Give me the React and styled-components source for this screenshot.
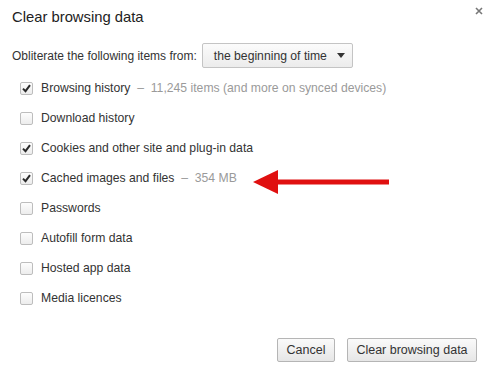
import React, { useState } from 'react';
import styled, { createGlobalStyle } from 'styled-components';

const GlobalStyle = createGlobalStyle`
  html, body {
    margin: 0;
    padding: 0;
    background: #ffffff;
  }
  body {
    font-family: "Liberation Sans", Arial, Helvetica, sans-serif;
    color: #303030;
  }
`;

const Dialog = styled.div`
  position: relative;
  width: 495px;
  height: 374px;
  box-sizing: border-box;
  display: flex;
  flex-direction: column;
  background: #fff;
`;

const Header = styled.div`
  display: flex;
  align-items: center;
  justify-content: space-between;
  padding: 7px 10px 0 12px;
  height: 20px;
`;

const Title = styled.h1`
  margin: 0;
  font-size: 14.8px;
  font-weight: normal;
  color: #222;
`;

const CloseButton = styled.button`
  border: 0;
  background: none;
  padding: 0;
  width: 12px;
  height: 12px;
  margin-top: -12px;
  display: flex;
  align-items: center;
  justify-content: center;
  cursor: pointer;
`;

const RangeRow = styled.div`
  display: flex;
  align-items: center;
  gap: 5px;
  padding: 0 12px;
  margin-top: 16px;
  font-size: 12px;
  color: #333;
`;

const Select = styled.div`
  box-sizing: border-box;
  width: 151px;
  height: 25px;
  display: flex;
  align-items: center;
  justify-content: space-between;
  padding: 0 7px 0 11px;
  border: 1px solid #c4c4c4;
  border-radius: 2px;
  background: linear-gradient(#fbfbfb, #ececec);
  font-size: 12.2px;
  color: #333;
`;

const Caret = styled.span`
  width: 0;
  height: 0;
  border-left: 4px solid transparent;
  border-right: 4px solid transparent;
  border-top: 5px solid #333;
`;

const List = styled.ul`
  list-style: none;
  margin: 5px 0 0;
  padding: 0 0 0 20px;
`;

const Row = styled.li`
  height: 30px;
  display: flex;
  align-items: center;
  gap: 8px;
  font-size: 12.2px;
  color: #333;
  cursor: default;
`;

const Box = styled.span`
  box-sizing: border-box;
  width: 13px;
  height: 13px;
  border: 1px solid #bdbdbd;
  border-radius: 2px;
  background: linear-gradient(#fdfdfd, #ececec);
  display: flex;
  align-items: center;
  justify-content: center;
  flex-shrink: 0;
`;

const Extra = styled.span`
  color: #9a9a9a;
`;

const LabelArea = styled.span`
  display: flex;
  align-items: center;
`;

const Pointer = styled.svg`
  margin-left: 16px;
  margin-top: 7px;
`;

const Footer = styled.div`
  margin-top: auto;
  display: flex;
  justify-content: flex-end;
  gap: 12px;
  padding: 0 18px 12px 0;
`;

const Button = styled.button`
  box-sizing: border-box;
  height: 24px;
  padding: 0;
  width: ${({ wide }) => (wide ? '130px' : '58px')};
  border: 1px solid #b5b5b5;
  border-radius: 2px;
  background: linear-gradient(#fafafa, #e6e6e6);
  font-family: "Liberation Sans", Arial, sans-serif;
  font-size: 12.5px;
  color: #333;
`;

const items = [
  { label: 'Browsing history', extra: '11,245 items (and more on synced devices)', checked: true },
  { label: 'Download history', checked: false },
  { label: 'Cookies and other site and plug-in data', checked: true },
  { label: 'Cached images and files', extra: '354 MB', checked: true, arrow: true },
  { label: 'Passwords', checked: false },
  { label: 'Autofill form data', checked: false },
  { label: 'Hosted app data', checked: false },
  { label: 'Media licences', checked: false },
];

const Check = () => (
  <svg width="9" height="9" viewBox="0 0 9 9">
    <path d="M1 4.6 L3.5 7.2 L8 1.2" fill="none" stroke="#2a2a2a" strokeWidth="2" />
  </svg>
);

const App = () => {
  const [state, setState] = useState(items.map(i => i.checked));

  const toggle = idx => setState(s => s.map((v, i) => (i === idx ? !v : v)));

  return (
    <Dialog>
      <GlobalStyle />
      <Header>
        <Title>Clear browsing data</Title>
        <CloseButton aria-label="close">
          <svg width="8" height="8" viewBox="0 0 8 8">
            <path d="M1 1 L7 7 M7 1 L1 7" stroke="#777" strokeWidth="1.6" />
          </svg>
        </CloseButton>
      </Header>

      <RangeRow>
        <span>Obliterate the following items from:</span>
        <Select>
          <span>the beginning of time</span>
          <Caret />
        </Select>
      </RangeRow>

      <List>
        {items.map((item, idx) => (
          <Row key={item.label} onClick={() => toggle(idx)}>
            <Box>{state[idx] && <Check />}</Box>
            <LabelArea>
              {item.label}
              {item.extra && <Extra>&nbsp; – &nbsp;{item.extra}</Extra>}
              {item.arrow && (
                <Pointer width="137" height="26" viewBox="0 0 137 26">
                  <polygon points="0,13 25,1 25,25" fill="#e01010" />
                  <rect x="22" y="10.5" width="114" height="5" fill="#e01010" />
                </Pointer>
              )}
            </LabelArea>
          </Row>
        ))}
      </List>

      <Footer>
        <Button>Cancel</Button>
        <Button wide>Clear browsing data</Button>
      </Footer>
    </Dialog>
  );
};

export default App;
